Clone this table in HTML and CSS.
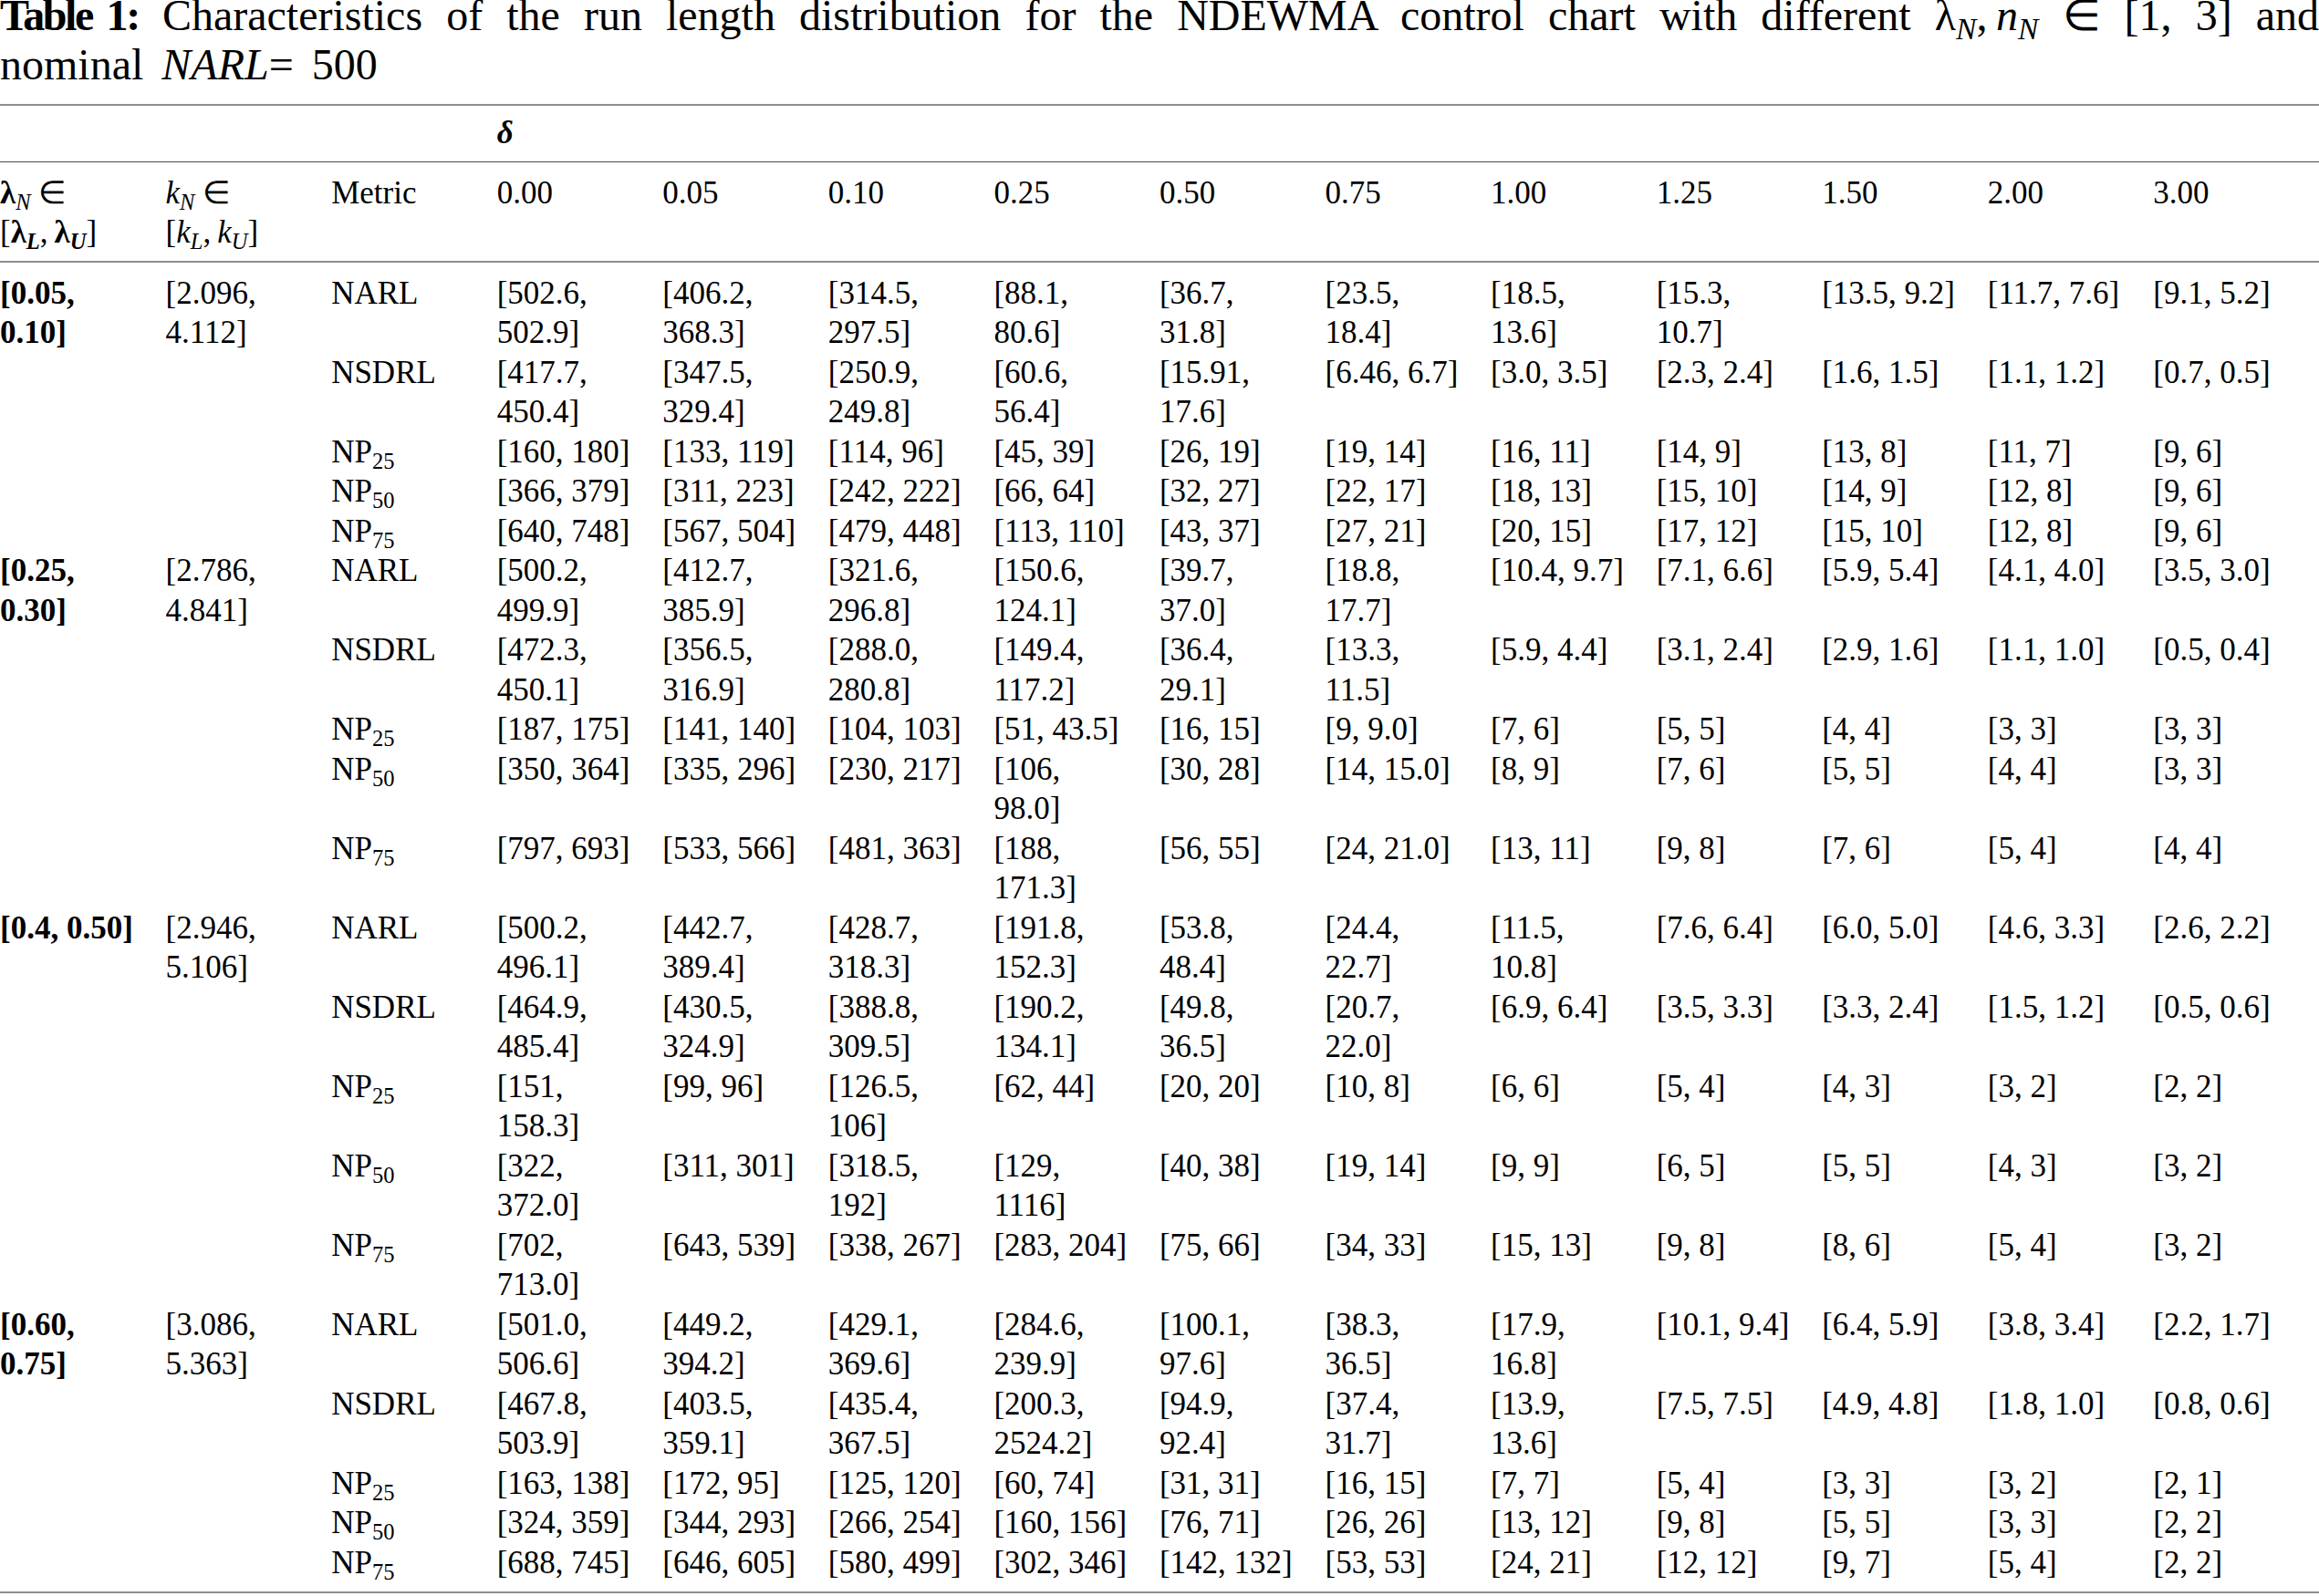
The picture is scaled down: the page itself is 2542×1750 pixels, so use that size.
FILE: index.html
```html
<!DOCTYPE html>
<html lang="en">
<head>
<meta charset="utf-8">
<title>Table 1</title>
<link rel="stylesheet" href="styles.css">
</head>
<body>
<p class="caption"><b class="label">Table 1:</b> Characteristics of the run length distribution for the NDEWMA control chart with different <span class="nw">λ<sub><i>N</i></sub>,&thinsp;<i>n</i><sub><i>N</i></sub></span> ∈ [1, 3] and nominal <i>NARL</i>= 500</p>
<table class="rl">
<colgroup>
<col class="c"><col class="c"><col class="c"><col class="c"><col class="c"><col class="c"><col class="c"><col class="c"><col class="c"><col class="c"><col class="c"><col class="c"><col class="c"><col class="c">
</colgroup>
<thead>
<tr class="delta-row"><th colspan="3"></th><th colspan="11"><b><i>δ</i></b></th></tr>
<tr class="head-row">
<th><b>λ</b><sub><i>N</i></sub> ∈ <span class="nw">[<b>λ</b><sub><b><i>L</i></b></sub>,&thinsp;<b>λ</b><sub><b><i>U</i></b></sub>]</span></th>
<th><i>k</i><sub><i>N</i></sub> ∈ <span class="nw">[<i>k</i><sub><i>L</i></sub>,&thinsp;<i>k</i><sub><i>U</i></sub>]</span></th>
<th>Metric</th>
<th>0.00</th><th>0.05</th><th>0.10</th><th>0.25</th><th>0.50</th><th>0.75</th><th>1.00</th><th>1.25</th><th>1.50</th><th>2.00</th><th>3.00</th>
</tr>
</thead>
<tbody>
<tr><td rowspan="5" class="lam">[0.05, 0.10]</td><td rowspan="5">[2.096, 4.112]</td><td>NARL</td><td>[502.6, 502.9]</td><td>[406.2, 368.3]</td><td>[314.5, 297.5]</td><td>[88.1, 80.6]</td><td>[36.7, 31.8]</td><td>[23.5, 18.4]</td><td>[18.5, 13.6]</td><td>[15.3, 10.7]</td><td>[13.5, 9.2]</td><td>[11.7, 7.6]</td><td>[9.1, 5.2]</td></tr>
<tr><td>NSDRL</td><td>[417.7, 450.4]</td><td>[347.5, 329.4]</td><td>[250.9, 249.8]</td><td>[60.6, 56.4]</td><td>[15.91, 17.6]</td><td>[6.46, 6.7]</td><td>[3.0, 3.5]</td><td>[2.3, 2.4]</td><td>[1.6, 1.5]</td><td>[1.1, 1.2]</td><td>[0.7, 0.5]</td></tr>
<tr><td>NP<sub>25</sub></td><td>[160, 180]</td><td>[133, 119]</td><td>[114, 96]</td><td>[45, 39]</td><td>[26, 19]</td><td>[19, 14]</td><td>[16, 11]</td><td>[14, 9]</td><td>[13, 8]</td><td>[11, 7]</td><td>[9, 6]</td></tr>
<tr><td>NP<sub>50</sub></td><td>[366, 379]</td><td>[311, 223]</td><td>[242, 222]</td><td>[66, 64]</td><td>[32, 27]</td><td>[22, 17]</td><td>[18, 13]</td><td>[15, 10]</td><td>[14, 9]</td><td>[12, 8]</td><td>[9, 6]</td></tr>
<tr><td>NP<sub>75</sub></td><td>[640, 748]</td><td>[567, 504]</td><td>[479, 448]</td><td>[113, 110]</td><td>[43, 37]</td><td>[27, 21]</td><td>[20, 15]</td><td>[17, 12]</td><td>[15, 10]</td><td>[12, 8]</td><td>[9, 6]</td></tr>

<tr><td rowspan="5" class="lam">[0.25, 0.30]</td><td rowspan="5">[2.786, 4.841]</td><td>NARL</td><td>[500.2, 499.9]</td><td>[412.7, 385.9]</td><td>[321.6, 296.8]</td><td>[150.6, 124.1]</td><td>[39.7, 37.0]</td><td>[18.8, 17.7]</td><td>[10.4, 9.7]</td><td>[7.1, 6.6]</td><td>[5.9, 5.4]</td><td>[4.1, 4.0]</td><td>[3.5, 3.0]</td></tr>
<tr><td>NSDRL</td><td>[472.3, 450.1]</td><td>[356.5, 316.9]</td><td>[288.0, 280.8]</td><td>[149.4, 117.2]</td><td>[36.4, 29.1]</td><td>[13.3, 11.5]</td><td>[5.9, 4.4]</td><td>[3.1, 2.4]</td><td>[2.9, 1.6]</td><td>[1.1, 1.0]</td><td>[0.5, 0.4]</td></tr>
<tr><td>NP<sub>25</sub></td><td>[187, 175]</td><td>[141, 140]</td><td>[104, 103]</td><td>[51, 43.5]</td><td>[16, 15]</td><td>[9, 9.0]</td><td>[7, 6]</td><td>[5, 5]</td><td>[4, 4]</td><td>[3, 3]</td><td>[3, 3]</td></tr>
<tr><td>NP<sub>50</sub></td><td>[350, 364]</td><td>[335, 296]</td><td>[230, 217]</td><td>[106, 98.0]</td><td>[30, 28]</td><td>[14, 15.0]</td><td>[8, 9]</td><td>[7, 6]</td><td>[5, 5]</td><td>[4, 4]</td><td>[3, 3]</td></tr>
<tr><td>NP<sub>75</sub></td><td>[797, 693]</td><td>[533, 566]</td><td>[481, 363]</td><td>[188, 171.3]</td><td>[56, 55]</td><td>[24, 21.0]</td><td>[13, 11]</td><td>[9, 8]</td><td>[7, 6]</td><td>[5, 4]</td><td>[4, 4]</td></tr>

<tr><td rowspan="5" class="lam">[0.4, 0.50]</td><td rowspan="5">[2.946, 5.106]</td><td>NARL</td><td>[500.2, 496.1]</td><td>[442.7, 389.4]</td><td>[428.7, 318.3]</td><td>[191.8, 152.3]</td><td>[53.8, 48.4]</td><td>[24.4, 22.7]</td><td>[11.5, 10.8]</td><td>[7.6, 6.4]</td><td>[6.0, 5.0]</td><td>[4.6, 3.3]</td><td>[2.6, 2.2]</td></tr>
<tr><td>NSDRL</td><td>[464.9, 485.4]</td><td>[430.5, 324.9]</td><td>[388.8, 309.5]</td><td>[190.2, 134.1]</td><td>[49.8, 36.5]</td><td>[20.7, 22.0]</td><td>[6.9, 6.4]</td><td>[3.5, 3.3]</td><td>[3.3, 2.4]</td><td>[1.5, 1.2]</td><td>[0.5, 0.6]</td></tr>
<tr><td>NP<sub>25</sub></td><td>[151, 158.3]</td><td>[99, 96]</td><td>[126.5, 106]</td><td>[62, 44]</td><td>[20, 20]</td><td>[10, 8]</td><td>[6, 6]</td><td>[5, 4]</td><td>[4, 3]</td><td>[3, 2]</td><td>[2, 2]</td></tr>
<tr><td>NP<sub>50</sub></td><td>[322, 372.0]</td><td>[311, 301]</td><td>[318.5, 192]</td><td>[129, 1116]</td><td>[40, 38]</td><td>[19, 14]</td><td>[9, 9]</td><td>[6, 5]</td><td>[5, 5]</td><td>[4, 3]</td><td>[3, 2]</td></tr>
<tr><td>NP<sub>75</sub></td><td>[702, 713.0]</td><td>[643, 539]</td><td>[338, 267]</td><td>[283, 204]</td><td>[75, 66]</td><td>[34, 33]</td><td>[15, 13]</td><td>[9, 8]</td><td>[8, 6]</td><td>[5, 4]</td><td>[3, 2]</td></tr>

<tr><td rowspan="5" class="lam">[0.60, 0.75]</td><td rowspan="5">[3.086, 5.363]</td><td>NARL</td><td>[501.0, 506.6]</td><td>[449.2, 394.2]</td><td>[429.1, 369.6]</td><td>[284.6, 239.9]</td><td>[100.1, 97.6]</td><td>[38.3, 36.5]</td><td>[17.9, 16.8]</td><td>[10.1, 9.4]</td><td>[6.4, 5.9]</td><td>[3.8, 3.4]</td><td>[2.2, 1.7]</td></tr>
<tr><td>NSDRL</td><td>[467.8, 503.9]</td><td>[403.5, 359.1]</td><td>[435.4, 367.5]</td><td>[200.3, 2524.2]</td><td>[94.9, 92.4]</td><td>[37.4, 31.7]</td><td>[13.9, 13.6]</td><td>[7.5, 7.5]</td><td>[4.9, 4.8]</td><td>[1.8, 1.0]</td><td>[0.8, 0.6]</td></tr>
<tr><td>NP<sub>25</sub></td><td>[163, 138]</td><td>[172, 95]</td><td>[125, 120]</td><td>[60, 74]</td><td>[31, 31]</td><td>[16, 15]</td><td>[7, 7]</td><td>[5, 4]</td><td>[3, 3]</td><td>[3, 2]</td><td>[2, 1]</td></tr>
<tr><td>NP<sub>50</sub></td><td>[324, 359]</td><td>[344, 293]</td><td>[266, 254]</td><td>[160, 156]</td><td>[76, 71]</td><td>[26, 26]</td><td>[13, 12]</td><td>[9, 8]</td><td>[5, 5]</td><td>[3, 3]</td><td>[2, 2]</td></tr>
<tr><td>NP<sub>75</sub></td><td>[688, 745]</td><td>[646, 605]</td><td>[580, 499]</td><td>[302, 346]</td><td>[142, 132]</td><td>[53, 53]</td><td>[24, 21]</td><td>[12, 12]</td><td>[9, 7]</td><td>[5, 4]</td><td>[2, 2]</td></tr>
</tbody>
</table>
</body>
</html>
```

FILE: styles.css
```css
html, body {
  margin: 0;
  padding: 0;
  background: #fff;
}

body {
  font-family: "Liberation Serif", "Times New Roman", serif;
  color: #000;
  font-size: 35px;
  line-height: 43.5px;
  overflow: hidden;
}

.caption {
  margin: -10px 0 16px;
  font-size: 48px;
  line-height: 54px;
  text-align: justify;
  word-spacing: 8px;
}

.caption .label {
  letter-spacing: -0.05em;
  word-spacing: 0;
}

.nw {
  white-space: nowrap;
}

sub {
  font-size: 0.7em;
  line-height: 0;
  vertical-align: -0.3em;
}

.rl {
  width: 100%;
  table-layout: fixed;
  border-collapse: collapse;
  border-top: 2px solid #8e8e8e;
  border-bottom: 2px solid #8e8e8e;
}

.rl col.c {
  width: 7.142857%;
}

.rl th,
.rl td {
  padding: 0 30px 0 0;
  text-align: left;
  vertical-align: top;
  font-weight: normal;
}

.delta-row {
  border-bottom: 1px solid #4a4a4a;
}

.delta-row th {
  padding-top: 8px;
  padding-bottom: 9px;
}

.head-row {
  border-bottom: 2px solid #8e8e8e;
}

.head-row th {
  padding-top: 12px;
  padding-bottom: 9px;
}

.rl tbody tr:first-child td {
  padding-top: 12px;
}

.rl tbody tr:last-child td {
  padding-bottom: 10px;
}

.rl td.lam {
  font-weight: bold;
}
```
